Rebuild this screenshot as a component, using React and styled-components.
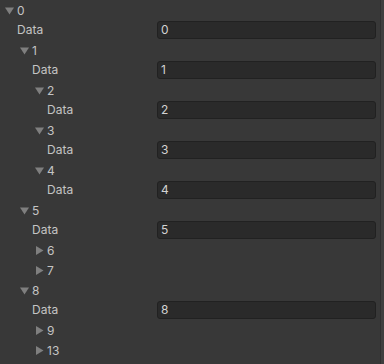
import React from 'react';
import styled, { createGlobalStyle } from 'styled-components';

const GlobalStyle = createGlobalStyle`
    html, body {
        margin: 0;
        padding: 0;
        background: #383838;
    }
    body {
        font-family: Inter, "Noto Sans", sans-serif;
        font-size: 12px;
        color: #c4c4c4;
    }
`;

const Panel = styled.div`
    width: 384px;
    height: 364px;
    display: flex;
    background: #383838;
    overflow: hidden;
`;

const List = styled.div`
    flex: 1;
    display: flex;
    flex-direction: column;
`;

const Edge = styled.div`
    width: 3px;
    background: #3e3e3e;
    border-left: 1px solid #2f2f2f;
`;

const Row = styled.div`
    height: 20px;
    display: flex;
    align-items: center;
    padding-left: ${props => 5 + props.depth * 15}px;
    padding-right: 4px;
`;

const Arrow = styled.svg`
    width: 9px;
    height: 9px;
    margin-right: 3px;
    flex: none;
    fill: #7f7f7f;
`;

const Label = styled.span`
    box-sizing: border-box;
    width: ${props => 156 - props.depth * 15}px;
    padding-left: 12px;
    flex: none;
    white-space: nowrap;
    line-height: 20px;
`;

const Field = styled.div`
    flex: 1;
    height: 16px;
    margin-left: -4px;
    margin-top: -1px;
    box-sizing: content-box;
    display: flex;
    align-items: center;
    padding-left: 3px;
    background: #2a2a2a;
    border: 1px solid #212121;
    border-radius: 3px;
    color: #d2d2d2;
`;

const Triangle = ({ open }) => (
    <Arrow viewBox="0 0 9 9">
        {open ? <path d="M0 1.5h9L4.5 8.5z" /> : <path d="M1 0v9l7.5-4.5z" />}
    </Arrow>
);

const tree = [
    { id: 0, open: true, children: [
        { id: 1, open: true, children: [
            { id: 2, open: true, children: [] },
            { id: 3, open: true, children: [] },
            { id: 4, open: true, children: [] },
        ] },
        { id: 5, open: true, children: [
            { id: 6, open: false },
            { id: 7, open: false },
        ] },
        { id: 8, open: true, children: [
            { id: 9, open: false },
            { id: 13, open: false },
        ] },
    ] },
];

const renderNode = (node, depth) => {
    const rows = [
        <Row key={`n${node.id}`} depth={depth}>
            <Triangle open={node.open} />
            <span>{node.id}</span>
        </Row>,
    ];
    if (node.open) {
        rows.push(
            <Row key={`d${node.id}`} depth={depth}>
                <Label depth={depth}>Data</Label>
                <Field>{node.id}</Field>
            </Row>
        );
        node.children.forEach(child => rows.push(...renderNode(child, depth + 1)));
    }
    return rows;
};

export default function App() {
    return (
        <>
            <GlobalStyle />
            <Panel>
                <List>{tree.map(node => renderNode(node, 0))}</List>
                <Edge />
            </Panel>
        </>
    );
}
